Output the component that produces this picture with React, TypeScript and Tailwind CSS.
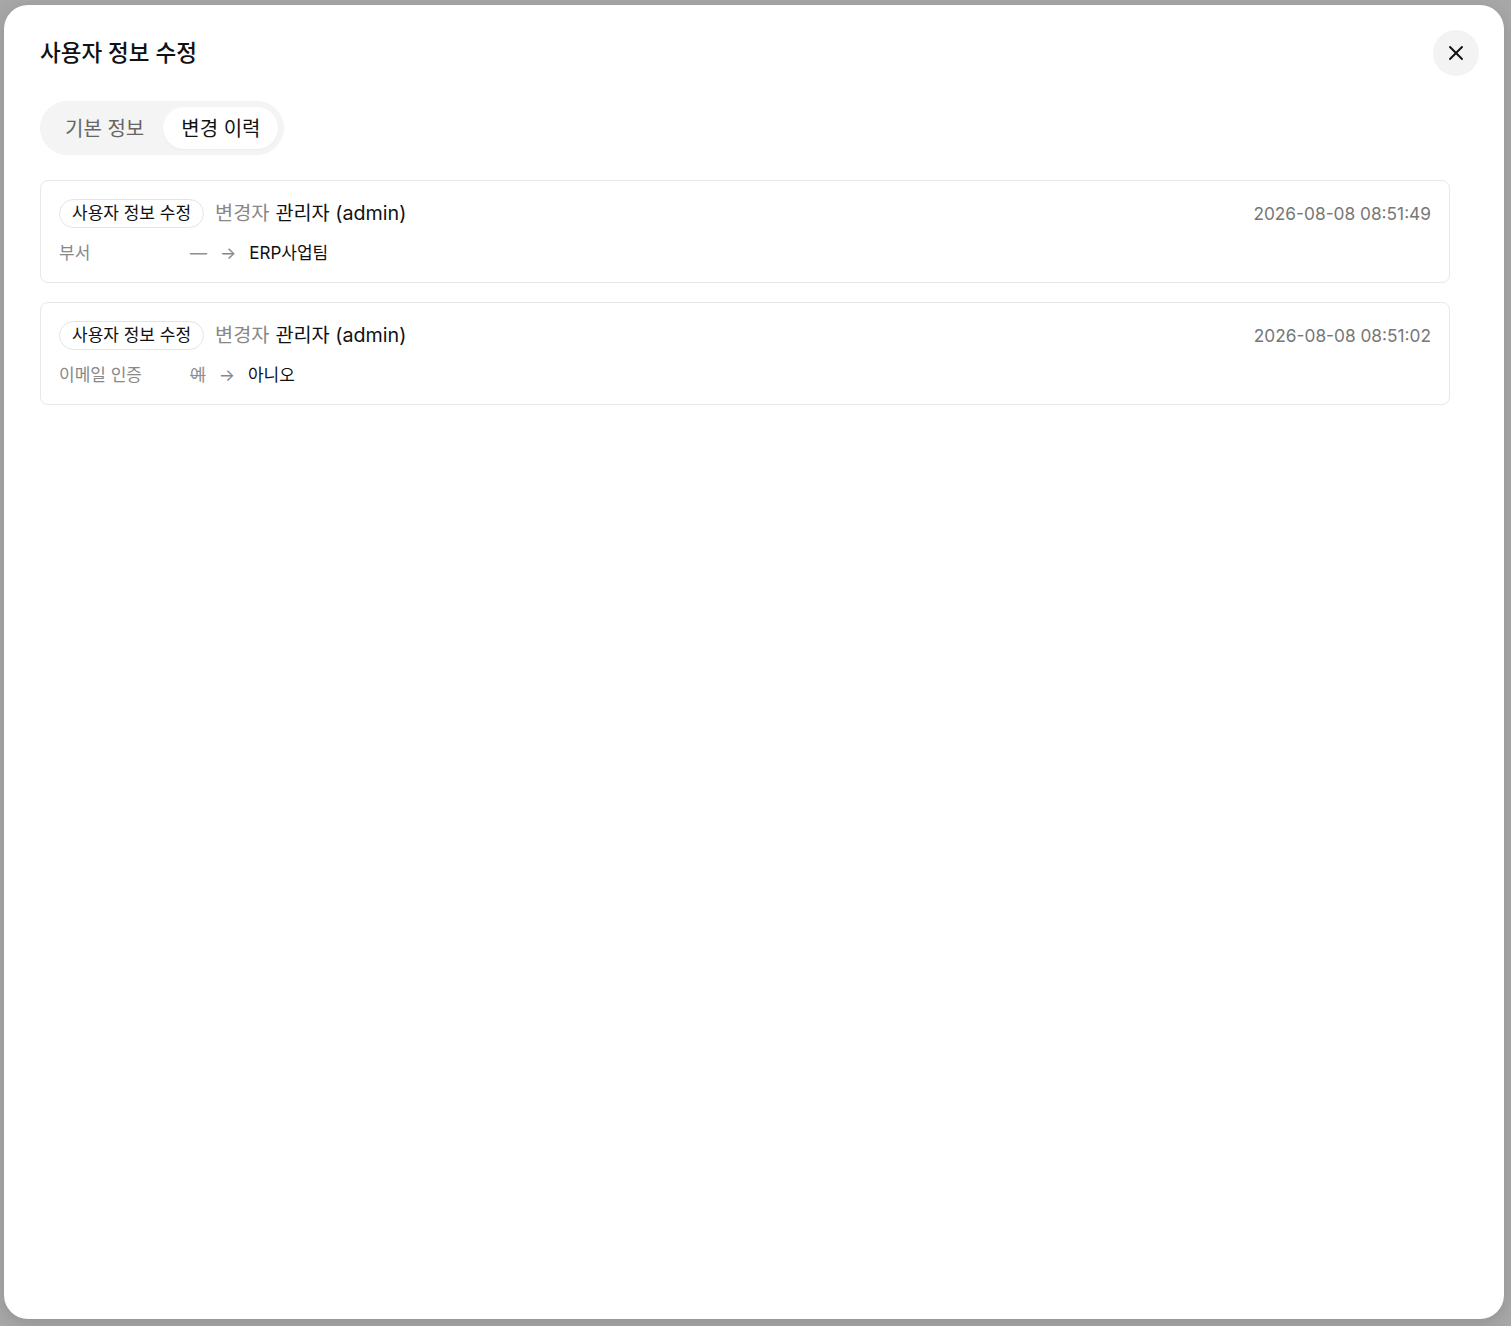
import React, { useState } from 'react';
import { X } from 'lucide-react';

interface HistoryItem {
  id: number;
  action: string;
  editor: string;
  at: string;
  field: string;
  before: string;
  after: string;
}

const history: HistoryItem[] = [
  { id: 1, action: '사용자 정보 수정', editor: '관리자 (admin)', at: '2026-08-08 08:51:49', field: '부서', before: '—', after: 'ERP사업팀' },
  { id: 2, action: '사용자 정보 수정', editor: '관리자 (admin)', at: '2026-08-08 08:51:02', field: '이메일 인증', before: '예', after: '아니오' },
];

export default function App() {
  const [tab, setTab] = useState<'info' | 'history'>('history');

  return (
    <div
      className="h-[1326px] w-full bg-[#a7a7a7] pt-[5px] pl-[4px] overflow-hidden"
      style={{ fontFamily: 'Inter, "Noto Sans CJK KR", sans-serif' }}
    >
      <div className="w-[1500px] h-[1314px] bg-white rounded-[24px] shadow-[0_4px_16px_rgba(0,0,0,0.12)] pl-[36px] pr-[54px] pt-[25px]">
        {/* Header */}
        <div className="flex items-center justify-between h-[46px] mr-[-29px]">
          <h2 className="text-[22.5px] font-medium text-[#111]">사용자 정보 수정</h2>
          <button className="w-[46px] h-[46px] rounded-full bg-[#f3f3f3] flex items-center justify-center text-[#111]">
            <X className="w-6 h-6" strokeWidth={1.9} />
          </button>
        </div>

        {/* Tabs */}
        <div className="mt-[25px] inline-flex items-center p-[6px] h-[54px] rounded-full bg-[#f4f4f4]">
          <button
            onClick={() => setTab('info')}
            className={`h-[42px] px-[19px] pt-[2px] rounded-full text-[20px] ${tab === 'info' ? 'bg-white text-[#111] shadow-sm' : 'text-[#666]'}`}
          >
            기본 정보
          </button>
          <button
            onClick={() => setTab('history')}
            className={`h-[42px] px-[18px] pt-[2px] rounded-full text-[20px] ${tab === 'history' ? 'bg-white text-[#111] shadow-[0_1px_2px_rgba(0,0,0,0.04)]' : 'text-[#666]'}`}
          >
            변경 이력
          </button>
        </div>

        {/* History list */}
        <div className="mt-[25px] flex flex-col gap-[19px]">
          {history.map((item) => (
            <div key={item.id} className="h-[103px] border border-[#e8e8e8] rounded-[8px] px-[18px] pt-[18px]">
              <div className="flex items-center justify-between h-[29px]">
                <div className="flex items-center">
                  <span className="h-[29px] px-[12px] flex items-center rounded-full border border-[#e4e4e4] text-[17px] text-[#111]">
                    {item.action}
                  </span>
                  <span className="ml-[11px] text-[19.7px] text-[#888]">변경자</span>
                  <span className="ml-[6px] text-[19.7px] text-[#111]">{item.editor}</span>
                </div>
                <span className="text-[17.3px] text-[#777]">{item.at}</span>
              </div>
              <div className="flex items-center mt-[15px] h-[22px] text-[17px]">
                <span className="w-[131px] text-[#888]">{item.field}</span>
                <span className="text-[#8f8f8f] line-through">{item.before}</span>
                <span className="ml-[13px] text-[#888]">→</span>
                <span className="ml-[13px] text-[#111]">{item.after}</span>
              </div>
            </div>
          ))}
        </div>
      </div>
    </div>
  );
}
